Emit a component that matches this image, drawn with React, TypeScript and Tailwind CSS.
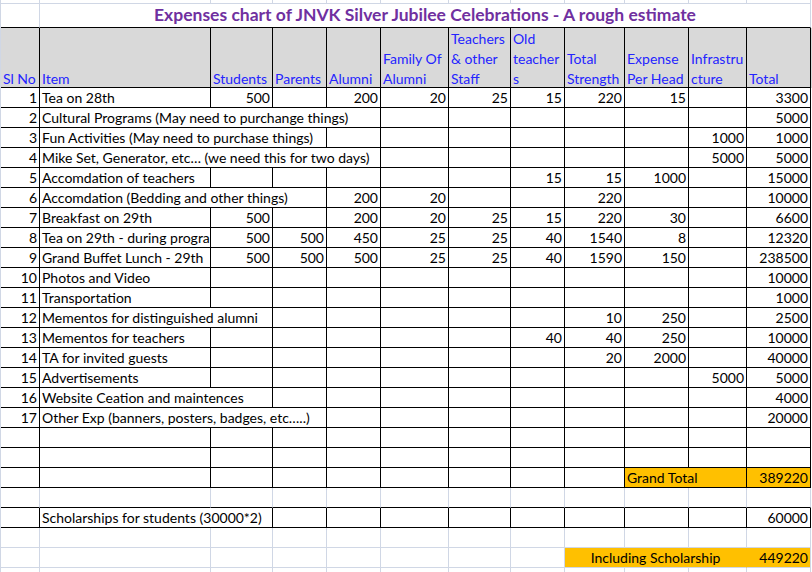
type Cell = {
  t?: string;
  s?: number;
  left?: boolean;
  center?: boolean;
  orange?: boolean;
  noRight?: boolean;
};

type RowSpec = {
  cells: (string | Cell)[];
  grid?: "black" | "light";
  bottom?: "black" | "light";
};

const cols =
  "grid grid-cols-[39px_171px_62px_54px_54px_68px_62px_54px_60px_64px_58px_64px]";

const spanClass: Record<number, string> = {
  1: "",
  2: "col-span-2",
  3: "col-span-3",
  4: "col-span-4",
  11: "col-span-11",
};

const e = (n: number) => Array.from({ length: n }, () => "");

const rows: RowSpec[] = [
  { cells: ["1", { t: "Tea on 28th", left: true }, "500", "", "200", "20", "25", "15", "220", "15", "", "3300"] },
  { cells: ["2", { t: "Cultural Programs (May need to purchange things)", s: 4, left: true }, ...e(6), "5000"] },
  { cells: ["3", { t: "Fun Activities (May need to purchase things)", s: 3, left: true }, ...e(6), "1000", "1000"] },
  { cells: ["4", { t: "Mike Set, Generator, etc… (we need this for two days)", s: 4, left: true }, ...e(5), "5000", "5000"] },
  { cells: ["5", { t: "Accomdation of teachers", left: true }, ...e(5), "15", "15", "1000", "", "15000"] },
  { cells: ["6", { t: "Accomdation (Bedding and other things)", s: 3, left: true }, "200", "20", "", "", "220", "", "", "10000"] },
  { cells: ["7", { t: "Breakfast on 29th", left: true }, "500", "", "200", "20", "25", "15", "220", "30", "", "6600"] },
  { cells: ["8", { t: "Tea on 29th - during program", left: true }, "500", "500", "450", "25", "25", "40", "1540", "8", "", "12320"] },
  { cells: ["9", { t: "Grand Buffet Lunch - 29th", left: true }, "500", "500", "500", "25", "25", "40", "1590", "150", "", "238500"] },
  { cells: ["10", { t: "Photos and Video", left: true }, ...e(9), "10000"] },
  { cells: ["11", { t: "Transportation", left: true }, ...e(9), "1000"] },
  { cells: ["12", { t: "Mementos for distinguished alumni", s: 2, left: true }, ...e(5), "10", "250", "", "2500"] },
  { cells: ["13", { t: "Mementos for teachers", left: true }, ...e(5), "40", "40", "250", "", "10000"] },
  { cells: ["14", { t: "TA for invited guests", left: true }, ...e(6), "20", "2000", "", "40000"] },
  { cells: ["15", { t: "Advertisements", left: true }, ...e(8), "5000", "5000"] },
  { cells: ["16", { t: "Website Ceation and maintences", s: 2, left: true }, ...e(8), "4000"] },
  { cells: ["17", { t: "Other Exp (banners, posters, badges, etc…..)", s: 3, left: true }, ...e(7), "20000"] },
  { cells: e(12) },
  { cells: e(12) },
  { cells: [...e(9), { t: "Grand Total", s: 2, left: true, orange: true }, { t: "389220", orange: true }] },
  { cells: e(12), grid: "light" },
  { cells: ["", { t: "Scholarships for students (30000*2)", s: 2, left: true }, ...e(8), "60000"] },
  { cells: e(12), grid: "light", bottom: "light" },
  {
    cells: [
      ...e(8),
      { t: "Including Scholarship", s: 3, center: true, orange: true, noRight: true },
      { t: "449220", orange: true },
    ],
    grid: "light",
    bottom: "light",
  },
  { cells: e(12), grid: "light", bottom: "light" },
];

function DataRow({ row }: { row: RowSpec }) {
  const grid = row.grid ?? "black";
  const bottom = row.bottom ?? "black";
  return (
    <div className={`${cols} h-5`}>
      {row.cells.map((raw, i) => {
        const c: Cell = typeof raw === "string" ? { t: raw } : raw;
        const rightCls = c.noRight
          ? "border-r-[#ffc000]"
          : grid === "black"
            ? "border-r-black"
            : "border-r-[#d0d7e5]";
        const bottomCls = bottom === "black" ? "border-b-black" : "border-b-[#d0d7e5]";
        const align = c.left ? "text-left pl-[2px]" : c.center ? "text-center" : "text-right pr-[2px]";
        return (
          <div
            key={i}
            className={`${spanClass[c.s ?? 1]} border-r border-b ${rightCls} ${bottomCls} ${align} ${
              c.orange ? "bg-[#ffc000]" : ""
            } overflow-hidden whitespace-nowrap leading-[19px]`}
          >
            {c.t}
          </div>
        );
      })}
    </div>
  );
}

const headers: string[][] = [
  ["Sl No"],
  ["Item"],
  ["Students"],
  ["Parents"],
  ["Alumni"],
  ["Family Of", "Alumni"],
  ["Teachers", "& other", "Staff"],
  ["Old", "teacher", "s"],
  ["Total", "Strength"],
  ["Expense", "Per Head"],
  ["Infrastru", "cture"],
  ["Total"],
];

export default function App() {
  return (
    <div className="w-[812px] h-[572px] overflow-hidden bg-white text-black text-[14px] font-['Lato',sans-serif]">
      <div className="border-l border-[#d0d7e5] w-[812px]">
        {/* row above the title, barely visible */}
        <div className={`${cols} h-1`}>
          {e(12).map((_, i) => (
            <div key={i} className="border-r border-b border-[#d0d7e5]" />
          ))}
        </div>

        {/* title */}
        <div className={`${cols} h-6`}>
          <div className="border-r border-r-[#d0d7e5] border-b border-b-black" />
          <div className="col-span-11 border-r border-r-[#d0d7e5] border-b border-b-black text-center font-bold text-[17.5px] leading-[22px] text-[#7030a0] whitespace-nowrap">
            Expenses chart of JNVK Silver Jubilee Celebrations - A rough estimate
          </div>
        </div>

        {/* header */}
        <div className={`${cols} h-[60px] bg-[#d9d9d9]`}>
          {headers.map((lines, i) => (
            <div
              key={i}
              className="border-r border-b border-black flex flex-col justify-end pl-[2px] text-[#2424ff] leading-[20px] whitespace-nowrap overflow-hidden"
            >
              <div className="flex flex-col translate-y-[2px]">
                {lines.map((l) => (
                  <span key={l}>{l}</span>
                ))}
              </div>
            </div>
          ))}
        </div>

        {rows.map((r, i) => (
          <DataRow key={i} row={r} />
        ))}
      </div>
    </div>
  );
}
